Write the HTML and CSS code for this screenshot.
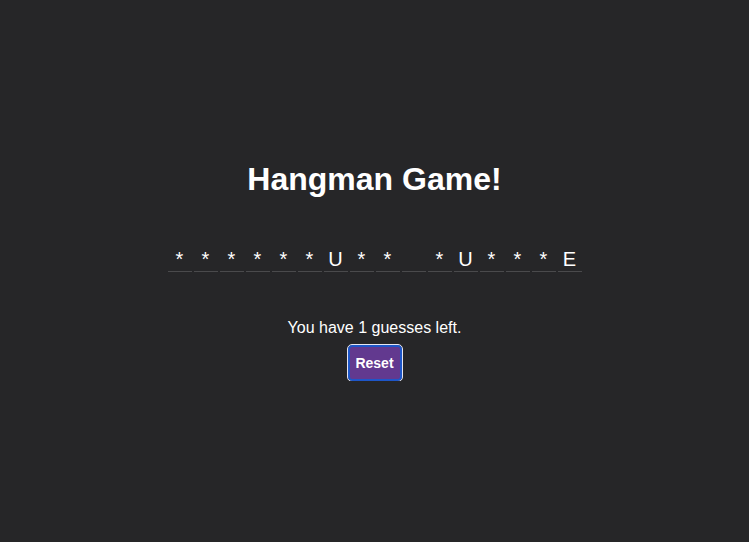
FILE: index.html
```html
<!DOCTYPE html>
<html>
<head>
<meta charset="utf-8">
<link rel="stylesheet" href="styles.css">
</head>
<body>
<main class="game">
  <h1 class="title">Hangman Game!</h1>
  <div class="word">
    <span class="slot star">*</span>
    <span class="slot star">*</span>
    <span class="slot star">*</span>
    <span class="slot star">*</span>
    <span class="slot star">*</span>
    <span class="slot star">*</span>
    <span class="slot">U</span>
    <span class="slot star">*</span>
    <span class="slot star">*</span>
    <span class="slot"></span>
    <span class="slot star">*</span>
    <span class="slot">U</span>
    <span class="slot star">*</span>
    <span class="slot star">*</span>
    <span class="slot star">*</span>
    <span class="slot">E</span>
  </div>
  <p class="status">You have 1 guesses left.</p>
  <button class="reset">Reset</button>
</main>
</body>
</html>
```
FILE: styles.css
```css
html, body {
  margin: 0;
  padding: 0;
}
body {
  background: #262628;
  color: #ffffff;
  font-family: "Liberation Sans", Arial, sans-serif;
}
.game {
  display: flex;
  flex-direction: column;
  align-items: center;
  padding-top: 161px;
}
.title {
  margin: 0;
  font-size: 32px;
  line-height: 37px;
  font-weight: bold;
}
.word {
  display: flex;
  gap: 2px;
  margin-top: 48px;
}
.slot {
  width: 24px;
  height: 26px;
  box-sizing: border-box;
  border-bottom: 1px solid #4a4a4c;
  text-align: center;
  font-size: 20px;
  line-height: 26px;
}
.status {
  margin: 47px 0 0;
  font-size: 16px;
  line-height: 18px;
}
.reset {
  margin-top: 8px;
  width: 54px;
  height: 36px;
  box-sizing: border-box;
  background: #62398f;
  color: #ffffff;
  border: 2px solid #1e56c8;
  outline: 1px solid #e6e6f0;
  border-radius: 4px;
  font-family: "Liberation Sans", Arial, sans-serif;
  font-size: 14px;
  font-weight: bold;
  padding: 0;
}
```
